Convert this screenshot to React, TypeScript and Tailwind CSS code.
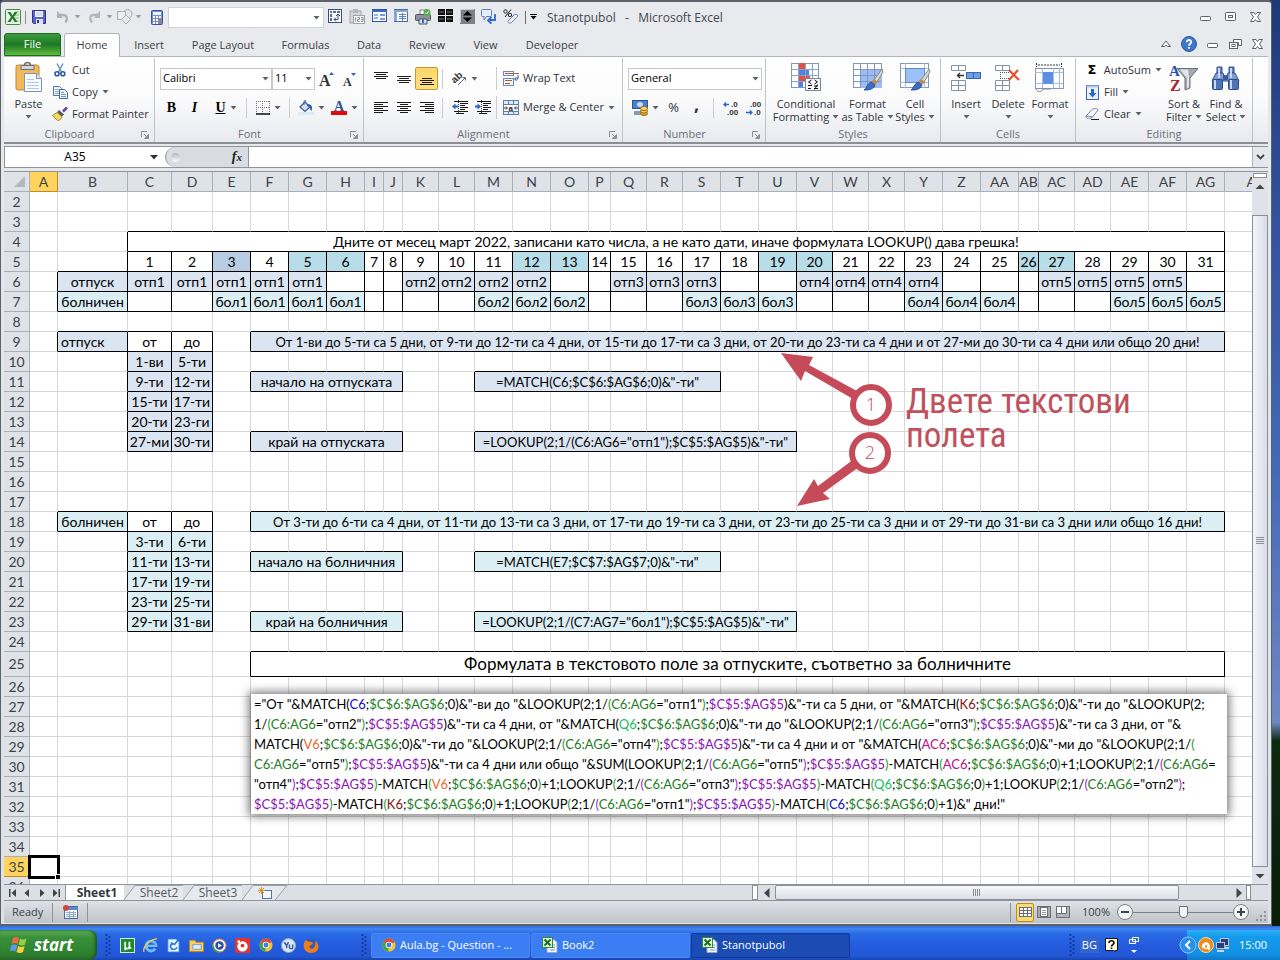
import type { ReactNode } from "react";
import { Fragment } from "react";

/* ---------- shared bits ---------- */

function Svg({ w = 16, h = 16, vb, children }: { w?: number; h?: number; vb?: string; children: ReactNode }) {
  return (
    <svg width={w} height={h} viewBox={vb ?? `0 0 ${w} ${h}`} fill="none" aria-hidden="true" className="shrink-0 overflow-visible">
      {children}
    </svg>
  );
}

function Caret({ color = "#5c6168" }: { color?: string }) {
  return (
    <Svg w={7} h={4}>
      <path d="M0.5 0h6L3.5 3.5z" fill={color} />
    </Svg>
  );
}

function Launcher() {
  return (
    <button aria-label="More options" className="absolute right-[5px] bottom-[3px]">
      <Svg w={8} h={8}>
        <path d="M0.5 6V0.5H6" stroke="#8b9098" />
        <path d="M3 3l3 3M7.500 3.500v4h-4z" stroke="#8b9098" fill="#8b9098" />
      </Svg>
    </button>
  );
}

function Sep({ h = "h-[20px]" }: { h?: string }) {
  return <span className={`w-px shrink-0 bg-[#c9cdd2] ${h}`} />;
}

/* ---------- icons ---------- */

const ExcelIcon = () => (
  <Svg>
    <rect x="0.5" y="0.5" width="15" height="15" rx="1" fill="#e9f4e4" stroke="#3f8f3a" />
    <path d="M10 3h4M10 6h4M10 9h4M10 12h4" stroke="#7bb872" />
    <path d="M2.500 3h3l2 3.500L9.500 3h3L9 8l3.500 5h-3l-2-3.400L5.500 13h-3L6 8z" fill="#1f7a2a" />
  </Svg>
);

const ExcelDoc = () => (
  <Svg>
    <path d="M5 2.500h7l3 3v10H5z" fill="#f4f7fb" stroke="#8fa6c6" />
    <path d="M8 8h5M8 10.500h5M8 13h5" stroke="#6f8fc0" />
    <rect x="0.500" y="0.500" width="10" height="10" fill="#e4f3dc" stroke="#2f8a34" />
    <path d="M2.500 2.500l6 6M8.500 2.500l-6 6" stroke="#1a6e22" strokeWidth="2" />
  </Svg>
);

const SaveIcon = () => (
  <Svg w={14} h={14}>
    <path d="M0.500 0.500h13v13h-12l-1-1z" fill="#5a62c8" stroke="#2f378c" />
    <rect x="3" y="1" width="8" height="6" fill="#f1f4fb" />
    <path d="M4 3h6M4 5h6" stroke="#b9c3dd" />
    <rect x="4" y="9" width="7" height="5" fill="#dfe4f1" />
    <rect x="5" y="10" width="2" height="3" fill="#2f378c" />
  </Svg>
);

const UndoIcon = () => (
  <Svg w={13} h={14}>
    <path d="M3 5h4c4 0 5 3.500 2.500 7.500" stroke="#aeb2b8" strokeWidth="2.400" />
    <path d="M1 0.500v7.500h6z" fill="#aeb2b8" />
  </Svg>
);

const RedoIcon = () => (
  <Svg w={13} h={14}>
    <path d="M10 5H6C2 5 1 8.500 4 12.500" stroke="#b4b8bd" strokeWidth="2.400" />
    <path d="M12 0.500v7.500H6z" fill="#b4b8bd" />
  </Svg>
);

const ShapesIcon = () => (
  <Svg>
    <circle cx="10.500" cy="5" r="4.500" fill="#e6e8ea" stroke="#a9adb2" />
    <rect x="0.500" y="2.500" width="8" height="8" fill="#eceeef" stroke="#a9adb2" />
    <path d="M9 6l4.500 4.500L9 15l-4.500-4.500z" fill="#e9ebed" stroke="#a9adb2" />
  </Svg>
);

const CalcIcon = () => (
  <Svg w={12} h={15}>
    <rect x="0.500" y="0.500" width="11" height="14" rx="1" fill="#6f8ed0" stroke="#37549c" />
    <rect x="2" y="2" width="8" height="3" fill="#eef3fc" />
    <g fill="#fff">
      <path d="M2 6h2v2H2zM5 6h2v2H5zM8 6h2v2H8zM2 9h2v2H2zM5 9h2v2H5zM2 12h2v2H2zM5 12h2v2H5z" />
    </g>
    <path d="M8 9h2v2H8zM8 12h2v2H8z" fill="#e06a3c" />
  </Svg>
);

const PivotIcon = () => (
  <Svg w={14} h={14}>
    <rect x="0.500" y="0.500" width="13" height="13" fill="#fff" stroke="#35507c" />
    <path d="M2 2h2v2H2zM5 2h3v2H5zM9 2h3v2H9zM2 5h2v3H2zM2 9h2v3H2z" fill="#4f6fa8" />
    <path d="M10 5.500v5H6M8 8.500l-2 2 2 2M8 7l2-2 2 2" stroke="#35507c" />
  </Svg>
);

const Paste123Icon = () => (
  <Svg>
    <rect x="1" y="2" width="11" height="12" fill="#d5d7da" stroke="#a0a4a9" />
    <rect x="4" y="0" width="5" height="4" fill="#b3b6ba" />
    <rect x="4.500" y="6.500" width="11" height="8" fill="#f4f5f6" stroke="#a0a4a9" />
    <path d="M6.500 8.500v4M8.500 8.500h2v2h-2v2h2M12 8.500h2v4h-2M12 10.500h2" stroke="#8f9398" />
  </Svg>
);

const FormIcon = () => (
  <Svg w={15} h={13}>
    <rect x="0.500" y="0.500" width="14" height="12" fill="#f6f9fe" stroke="#2c55a5" />
    <path d="M0 1h15v2H0z" fill="#3f6cc0" />
    <path d="M2 6h4M2 9h4" stroke="#3f6cc0" />
    <path d="M8 5h5v2H8zM8 9h5v2H8z" fill="#7c9bd6" />
  </Svg>
);

const TableIcon = () => (
  <Svg w={14} h={14}>
    <rect x="0.500" y="0.500" width="13" height="12" fill="#fff" stroke="#4a6ea8" />
    <path d="M0 1h14v2H0zM0 3h3v9H0z" fill="#86a4d6" />
    <path d="M5 5.500h7M5 7.500h7M5 9.500h7M8.500 4v8" stroke="#5d82bf" />
  </Svg>
);

const PrinterIcon = () => (
  <Svg>
    <path d="M5 1h7v5H5z" fill="#fff" stroke="#7a7f86" />
    <rect x="0.500" y="5.500" width="15" height="6" rx="1" fill="#8f949b" stroke="#4e5359" />
    <path d="M4 10h8v5H4z" fill="#cfe0f8" stroke="#4e5359" />
    <path d="M7 10h2v4H7z" fill="#3a6cc8" />
    <circle cx="12" cy="3.500" r="3.500" fill="#57ab4a" />
    <path d="M10.200 3.500l1.500 1.500 2.200-3" stroke="#fff" />
  </Svg>
);

const FreezeIcon = () => (
  <Svg w={15} h={13}>
    <path d="M0 0h7v6H0zM8 0h7v6H8zM0 7h7v6H0zM8 7h7v6H8z" fill="#111" />
    <path d="M1 3h5M9 3h5M1 10h5M9 10h5" stroke="#777" />
  </Svg>
);

const SpinnerIcon = () => (
  <Svg w={15} h={15}>
    <rect width="15" height="15" fill="#7c8187" />
    <path d="M0 0h14v1H1v13H0z" fill="#c9ccd0" />
    <path d="M7.500 2L12 6.500H3zM7.500 13L3 8.500h9z" fill="#000" />
  </Svg>
);

const CalloutIcon = () => (
  <Svg>
    <rect x="0.500" y="0.500" width="10" height="7" rx="1" fill="#e4edfb" stroke="#5c7fb8" />
    <path d="M3 7v4l3-4" fill="#e4edfb" stroke="#5c7fb8" />
    <path d="M14 5v6H8M10.500 8L7 11.500l3.500 3" stroke="#2f6ccf" strokeWidth="1.800" />
  </Svg>
);

const PercentEraserIcon = () => (
  <Svg>
    <circle cx="2.500" cy="2.500" r="1.700" stroke="#222" />
    <circle cx="7" cy="6" r="1.700" stroke="#222" />
    <path d="M8 0.500L2 8" stroke="#222" />
    <path d="M5 12l6-6c1-1 4-1 4 1l-6 6c-1 2-5 1-4-1z" fill="#f1f5fb" stroke="#6d86b4" />
  </Svg>
);

const PasteIcon = () => (
  <Svg w={28} h={31}>
    <rect x="1" y="3" width="23" height="25" rx="2" fill="#f0b95c" stroke="#c28a2d" />
    <path d="M6 3.500h13v4H6z" fill="#d5d7da" stroke="#6c7076" />
    <path d="M9.500 3.500c0-4 6-4 6 0" stroke="#6c7076" strokeWidth="1.500" />
    <path d="M9.500 11.500h12l5 5v13h-17z" fill="#f7faff" stroke="#7d94b8" />
    <path d="M21.500 11.500v5h5" fill="#dde7f6" stroke="#7d94b8" />
    <path d="M12 17.500h7M12 20.500h12M12 23.500h12M12 26.500h12" stroke="#b7c6de" />
  </Svg>
);

const CutIcon = () => (
  <Svg w={12} h={14}>
    <path d="M3 0.500L7.500 9M9 0.500L4.500 9" stroke="#6a8fc4" strokeWidth="1.500" />
    <circle cx="3" cy="10.800" r="2" stroke="#2b57a4" strokeWidth="1.600" />
    <circle cx="8.800" cy="10.800" r="2" stroke="#2b57a4" strokeWidth="1.600" />
  </Svg>
);

const CopyIcon = () => (
  <Svg w={15} h={13}>
    <path d="M0.500 0.500h6l2 2v7h-8z" fill="#f1f6fe" stroke="#4d74b4" />
    <path d="M2 3.500h4M2 5.500h4M2 7.500h4" stroke="#8fabd8" />
    <path d="M6.500 3.500h5l3 3v6h-8z" fill="#f1f6fe" stroke="#3d66ab" />
    <path d="M8 6.500h3M8 8.500h5M8 10.500h5" stroke="#6f93cb" />
  </Svg>
);

const BrushIcon = () => (
  <Svg w={16} h={14}>
    <path d="M15 0.500l-4 4" stroke="#5a4a9c" strokeWidth="2.500" />
    <path d="M7 3l5 4.500-2 2L5 5.500z" fill="#555a66" />
    <path d="M5 5.500l5 4.500c-1 2.500-3 3.500-4.500 3.500C4 12 2 10 0.500 8.500z" fill="#f3da6b" stroke="#b08f28" />
  </Svg>
);

const BorderIcon = () => (
  <Svg w={14} h={14}>
    <path d="M0.500 0v13M13.500 0v13M6.500 0v13M0 0.500h14M0 6.500h14" stroke="#777" strokeDasharray="1 1" />
    <path d="M0 13h14" stroke="#111" strokeWidth="1.500" />
  </Svg>
);

const BucketIcon = () => (
  <Svg w={16} h={15}>
    <path d="M2 7l5-5 5 5-5 4.500z" fill="#d2e0f4" stroke="#3f6098" strokeWidth="1.300" />
    <path d="M6 5V1.500c0-1.500 2-1.500 2 0" stroke="#4b6a9c" />
    <path d="M9 4c5 0 6 3.500 4.500 7-1.500-1-1-4-4.500-5z" fill="#2c5fb4" />
    <path d="M0 12h16v3H0z" fill="#dcebf3" />
  </Svg>
);

const OrientIcon = () => (
  <Svg w={15} h={14}>
    <text x="0" y="9" transform="rotate(-42 5 7)" fontSize="10" fontWeight="bold" fontFamily="Liberation Sans" fill="#333">
      ab
    </text>
    <path d="M6 13l7-7M13.500 8.500v-3h-3" stroke="#666" />
  </Svg>
);

const lines = {
  top: "M1 1.500h14M3 3.500h10M1 5.500h14M3 7.500h10",
  middle: "M1 5.500h14M3 7.500h10M1 9.500h14M3 11.500h10",
  bottom: "M3 7.500h10M1 9.500h14M3 11.500h10M1 13.500h14",
  left: "M1 2.500h14M1 4.500h9M1 6.500h14M1 8.500h9M1 10.500h14M1 12.500h9",
  center: "M1 2.500h14M4 4.500h8M1 6.500h14M4 8.500h8M1 10.500h14M4 12.500h8",
  right: "M1 2.500h14M6 4.500h9M1 6.500h14M6 8.500h9M1 10.500h14M6 12.500h9",
};

const Lines = ({ kind }: { kind: keyof typeof lines }) => (
  <Svg>
    <path d={lines[kind]} stroke="#1b1b1b" />
  </Svg>
);

const IndentIcon = ({ out }: { out?: boolean }) => (
  <Svg>
    <path d="M2 1.500h14M8 3.500h8M8 5.500h5M8 7.500h8M8 9.500h5M2 11.500h14M4 13.500h8" stroke="#1b1b1b" />
    <path d="M6.500 0v14" stroke="#444" strokeDasharray="1 1" />
    <path d={out ? "M0 6.500l3.500-3v2H6v2H3.500v2z" : "M6 6.500l-3.500-3v2H0v2h2.500v2z"} fill="#2d62c8" />
  </Svg>
);

const WrapIcon = () => (
  <Svg>
    <rect x="0.500" y="0.500" width="10" height="4" fill="#eef3fb" stroke="#7089b3" />
    <path d="M2 2.500h14" stroke="#a4612b" />
    <rect x="0.500" y="7.500" width="10" height="7" fill="#eef3fb" stroke="#7089b3" />
    <path d="M2 9.500h7M2 12.500h5" stroke="#a4612b" />
    <path d="M15 4v4h-3M13.500 6l-2 2 2 2" stroke="#2b57a4" />
  </Svg>
);

const MergeIcon = () => (
  <Svg>
    <rect x="0.500" y="0.500" width="15" height="14" fill="#dfeafb" stroke="#5e7eb0" />
    <path d="M0 4.500h16M0 11.500h16M5.500 0v4M10.500 0v4M5.500 12v3M10.500 12v3" stroke="#5e7eb0" />
    <rect x="1" y="5" width="14" height="6" fill="#fff" />
    <path d="M1 8h3M15 8h-3M3 6.500L4.500 8 3 9.500M13 6.500L11.500 8 13 9.500" stroke="#333" />
    <text x="5.500" y="10.500" fontSize="8" fontWeight="bold" fontFamily="Liberation Sans" fill="#222">
      a
    </text>
  </Svg>
);

const MoneyIcon = () => (
  <Svg>
    <rect x="0.500" y="0.500" width="15" height="8" fill="#4b80cb" stroke="#2b5596" />
    <ellipse cx="8" cy="4.500" rx="3" ry="2.500" fill="#c5dbf6" />
    <path d="M2 11h7v4H2z" fill="#8f9aa8" />
    <ellipse cx="12" cy="13.500" rx="3.500" ry="2" fill="#e0a92c" stroke="#9c6d10" />
    <ellipse cx="12" cy="11" rx="3.500" ry="2" fill="#f4c94e" stroke="#9c6d10" />
    <ellipse cx="12" cy="8.500" rx="3.500" ry="2" fill="#f8dc7a" stroke="#9c6d10" />
  </Svg>
);

const DecimalIcon = ({ more }: { more?: boolean }) => (
  <Svg w={16} h={14}>
    <text x={more ? 8 : 4} y="6" fontSize="8" fontWeight="bold" fontFamily="Liberation Sans" fill="#333">
      {more ? ".0" : ".00"}
    </text>
    <text x={more ? 4 : 8} y="14" fontSize="8" fontWeight="bold" fontFamily="Liberation Sans" fill="#333">
      {more ? ".00" : ".0"}
    </text>
    <path d={more ? "M6 3.500H1M3 1.500l-2 2 2 2" : "M0 11.500h6M4 9.500l2 2-2 2"} stroke="#2d62c8" strokeWidth="1.300" />
  </Svg>
);

const CondIcon = () => (
  <Svg w={30} h={29}>
    <rect x="0.500" y="0.500" width="27" height="24" fill="#fff" stroke="#7c97c4" />
    <path d="M7 0h7v6H7zM7 12h12v6H7z" fill="#e2513f" />
    <path d="M7 6h11v6H7zM7 18h5v6H7z" fill="#4f83dc" />
    <path d="M7.500 0v25M14.500 0v25M21.500 0v25M0 6.500h28M0 12.500h28M0 18.500h28" stroke="#8aa3cc" />
    <rect x="14.500" y="15.500" width="15" height="12" fill="#f7f9fc" stroke="#7a869a" />
    <path d="M20.500 17l-3 2 3 2M17 22.500h4M17 25.500h3M23.500 17l3 2-3 2M23 23h4M23 25.500h4M26.500 21.500l-3 5" stroke="#111" />
  </Svg>
);

const PaintBrush = () => (
  <>
    <path d="M29 6l-8 11 3 2 6-10z" fill="#d9d9d4" stroke="#8b8b85" />
    <path d="M21 16l4 3-3 3-4-3z" fill="#c08a52" />
    <path d="M18 19l4 3c-2 5-7 5-11 5 3-2 3-6 7-8z" fill="#3c6fc4" stroke="#2a559e" />
  </>
);

const TableFormatIcon = () => (
  <Svg w={30} h={29}>
    <rect x="0.500" y="0.500" width="28" height="24" fill="#fff" stroke="#7c97c4" />
    <path d="M7 6h22v19H7z" fill="#9dbdf2" />
    <path d="M7.500 0v25M14.500 0v25M21.500 0v25M0 6.500h28M0 12.500h28M0 18.500h28" stroke="#7c97c4" />
    <PaintBrush />
  </Svg>
);

const CellStylesIcon = () => (
  <Svg w={30} h={29}>
    <rect x="0.500" y="0.500" width="28" height="24" fill="#fff" stroke="#7c97c4" />
    <path d="M0 5.500h28M0 19.500h28M5.500 0v25M24.500 0v25" stroke="#a9bcdc" />
    <rect x="5.500" y="5.500" width="19" height="14" fill="#9dc0f8" stroke="#5f8cd6" />
    <PaintBrush />
  </Svg>
);

const InsertCellsIcon = () => (
  <Svg w={30} h={28}>
    <path d="M0.500 1.500h14v5h-14zM7.500 1.500v5M0.500 16.500h14v10h-14zM7.500 16.500v10M0.500 21.500h14" fill="#fff" stroke="#8392ab" />
    <rect x="15.500" y="8.500" width="14" height="6" fill="#6f9ce6" stroke="#3766b4" />
    <path d="M22.500 8v7" stroke="#3766b4" />
    <path d="M13 11.500H6M9 9l-2.500 2.500L9 14" stroke="#333" strokeWidth="1.300" />
  </Svg>
);

const DeleteCellsIcon = () => (
  <Svg w={26} h={28}>
    <path d="M0.500 1.500h14v5h-14zM7.500 1.500v5M0.500 16.500h14v10h-14zM7.500 16.500v10M0.500 21.500h14" fill="#fff" stroke="#8392ab" />
    <path d="M5 8.500h9M5 14.500h9M5.500 8v7" stroke="#555" strokeDasharray="1 1" />
    <path d="M14 6l10 10M23 6l-9 10" stroke="#e8502f" strokeWidth="2.200" />
  </Svg>
);

const FormatCellsIcon = () => (
  <Svg w={30} h={30}>
    <path d="M1.500 0v4M26.500 0v4M3 2h22" stroke="#333" strokeDasharray="2 1" />
    <rect x="0.500" y="5.500" width="28" height="20" fill="#fff" stroke="#7c97c4" />
    <path d="M0 9.500h28M0 20.500h28M7.500 5v20M18.500 5v20M24.500 5v20" stroke="#a9bcdc" />
    <rect x="8" y="9" width="10" height="12" fill="#5c8fe4" />
    <path d="M1 26c2 4 6 3 7 0h8" stroke="#7c8aa3" />
  </Svg>
);

const FillIcon = () => (
  <Svg w={13} h={15}>
    <rect x="0.500" y="0.500" width="12" height="14" fill="#eaf1fc" stroke="#3f64a8" />
    <path d="M0.500 0.500h12v2h-12z" fill="#b3c9ec" />
    <path d="M5 4h3v4h2.500l-4 4.500L2.500 8H5z" fill="#2d66d0" />
  </Svg>
);

const EraserIcon = () => (
  <Svg w={14} h={12}>
    <path d="M1 8l6-6.500c1-1 6-1.500 6 .5L7.500 9C6 11 0 11 1 8z" fill="#f5f8fd" stroke="#6f83a8" />
    <path d="M1 8l5 .5L7.500 9" stroke="#6f83a8" />
    <path d="M6 11.500h8" stroke="#222" />
  </Svg>
);

const SortIcon = () => (
  <Svg w={30} h={29}>
    <text x="0" y="13" fontSize="15" fontWeight="bold" fontFamily="Liberation Serif" fill="#2b55a8">
      A
    </text>
    <text x="1" y="28" fontSize="16" fontWeight="bold" fontFamily="Liberation Serif" fill="#a3272b">
      Z
    </text>
    <path d="M8 5.500h21L21 15v10l-5 2V15z" fill="#a6aab0" stroke="#6d7178" />
    <path d="M11 6.500h8l1 8v10l-2 1V15z" fill="#e3e5e8" />
  </Svg>
);

const FindIcon = () => (
  <Svg w={28} h={26}>
    <path d="M5 2h5v6H5zM17 2h5v6h-5z" fill="#5f7fb8" stroke="#32518e" />
    <path d="M4 8h7l2 5h1l2-5h7l4 8H0z" fill="#7d9bd0" stroke="#32518e" />
    <rect x="0.500" y="14.500" width="10" height="10" rx="1" fill="#4f74b6" stroke="#2c4a86" />
    <rect x="16.500" y="14.500" width="10" height="10" rx="1" fill="#4f74b6" stroke="#2c4a86" />
    <path d="M3 15v9M19 15v9M7 3v10M19 3v10" stroke="#c8d8f2" strokeWidth="2" />
    <rect x="11" y="10" width="5" height="5" fill="#3a5b9c" />
  </Svg>
);

const MinGlyph = () => (
  <Svg w={12} h={12}>
    <rect x="0.500" y="5.500" width="10" height="4" rx="1" fill="#fff" stroke="#5d6168" />
  </Svg>
);

const MaxGlyph = () => (
  <Svg w={12} h={12}>
    <rect x="0.500" y="1.500" width="10" height="8" rx="1" fill="#fff" stroke="#5d6168" />
    <rect x="3.500" y="4.500" width="4" height="2" stroke="#5d6168" />
  </Svg>
);

const RestoreGlyph = () => (
  <Svg w={13} h={12}>
    <path d="M4.500 1.500h8v6h-3v-3h-5z" fill="#fff" stroke="#5d6168" />
    <rect x="0.500" y="4.500" width="8" height="6" fill="#fff" stroke="#5d6168" />
    <rect x="3" y="6.500" width="3" height="2" stroke="#5d6168" />
  </Svg>
);

const CloseGlyph = () => (
  <Svg w={12} h={12}>
    <path d="M0.500 1.500h3.500l1.500 2 1.500-2h3.500L7.500 6l3 4.500H7l-1.500-2-1.500 2H0.500l3-4.500z" fill="#fff" stroke="#5d6168" />
  </Svg>
);

/* ---------- title bar ---------- */

const quickTools: [string, () => ReactNode][] = [
  ["PivotTable", PivotIcon],
  ["Paste values", Paste123Icon],
  ["Form", FormIcon],
  ["Table", TableIcon],
  ["Print", PrinterIcon],
  ["Freeze panes", FreezeIcon],
  ["Spinner", SpinnerIcon],
  ["Comments", CalloutIcon],
  ["Clear formats", PercentEraserIcon],
];

function TitleBar() {
  return (
    <header className="flex h-[30px] items-center text-[#41464d]">
      <span className="flex w-[18px] justify-center">
        <ExcelIcon />
      </span>
      <span className="mx-[3px] h-[13px] w-px bg-[#8b9098]" />
      <button aria-label="Save" className="flex w-[20px] justify-center">
        <SaveIcon />
      </button>
      <button aria-label="Undo" className="flex w-[32px] items-center justify-end gap-[5px]">
        <UndoIcon />
        <Caret color="#a0a4aa" />
      </button>
      <button aria-label="Redo" className="flex w-[32px] items-center justify-end gap-[5px]">
        <RedoIcon />
        <Caret color="#a0a4aa" />
      </button>
      <button aria-label="Shapes" className="flex w-[29px] items-center justify-end gap-[2px]">
        <ShapesIcon />
        <Caret color="#a0a4aa" />
      </button>
      <button aria-label="Calculator" className="ml-[5px] flex w-[20px] justify-center">
        <CalcIcon />
      </button>
      <span className="relative ml-px w-[156px]">
        <select aria-label="Style" className="block h-[21px] w-full appearance-none border border-[#cfd2d6] bg-white">
          <option></option>
        </select>
        <span className="pointer-events-none absolute top-[9px] right-[4px]">
          <Caret />
        </span>
      </span>
      <div className="flex">
        {quickTools.map(([label, Icon]) => (
          <button key={label} aria-label={label} className="flex w-[22px] justify-center">
            <Icon />
          </button>
        ))}
      </div>
      <span className="mr-[4px] ml-[3px] h-[13px] w-px bg-[#6a6f76]" />
      <button aria-label="Customize toolbar" className="flex flex-col items-center gap-px">
        <span className="h-px w-[7px] bg-black" />
        <Caret color="#000" />
      </button>
      <h1 className="mt-[2px] ml-[10px] flex-1 text-[12px] leading-[16px] whitespace-pre">Stanotpubol   -   Microsoft Excel</h1>
      <div className="mr-[6px] flex gap-[13px]">
        <button aria-label="Minimize">
          <MinGlyph />
        </button>
        <button aria-label="Maximize">
          <MaxGlyph />
        </button>
        <button aria-label="Close">
          <CloseGlyph />
        </button>
      </div>
    </header>
  );
}

const tabs: [string, string][] = [
  ["Insert", "w-[58px]"],
  ["Page Layout", "w-[90px]"],
  ["Formulas", "w-[75px]"],
  ["Data", "w-[52px]"],
  ["Review", "w-[64px]"],
  ["View", "w-[53px]"],
  ["Developer", "w-[80px]"],
];

function RibbonTabs() {
  return (
    <nav className="flex h-[25px] items-end border-b border-[#b0b5bb] text-[11px] text-[#3c4148]">
      <button className="h-[23px] w-[57px] rounded-t-[3px] border border-[#1d6a22] bg-gradient-to-b from-[#3a9a3a] via-[#1c7a26] to-[#5fbb3c] text-white">
        File
      </button>
      <button className="relative top-px ml-[3px] h-[24px] w-[56px] rounded-t-[3px] border border-b-0 border-[#b0b5bb] bg-white">
        Home
      </button>
      {tabs.map(([name, width]) => (
        <button key={name} className={`h-[23px] pt-px ${width}`}>
          {name}
        </button>
      ))}
      <div className="mr-[4px] ml-auto flex h-[24px] items-center gap-[10px]">
        <button aria-label="Collapse ribbon">
          <Svg w={10} h={8}>
            <path d="M0.500 6.500L5 1l4.500 5.500H6.500L5 5 3.500 6.500z" fill="#fff" stroke="#5d6168" />
          </Svg>
        </button>
        <button aria-label="Help">
          <Svg>
            <circle cx="8" cy="8" r="7.500" fill="#3f78c8" stroke="#2c5ca4" />
            <path d="M5.800 6.200c0-3.200 4.600-2.800 4.400 0C10 7.800 8 7.800 8 9.800M8 11v1.800" stroke="#fff" strokeWidth="1.800" />
          </Svg>
        </button>
        <button aria-label="Minimize workbook">
          <MinGlyph />
        </button>
        <button aria-label="Restore workbook">
          <RestoreGlyph />
        </button>
        <button aria-label="Close workbook">
          <CloseGlyph />
        </button>
      </div>
    </nav>
  );
}

/* ---------- ribbon ---------- */

function Group({ name, width, launcher, children }: { name: string; width: string; launcher?: boolean; children: ReactNode }) {
  return (
    <section aria-label={name} className={`relative flex shrink-0 flex-col border-r border-[#bfc4ca] ${width}`}>
      <div className="flex-1">{children}</div>
      <div className={`h-[17px] text-center leading-[17px] text-[#6b7078] ${launcher ? "pr-[19px]" : ""}`}>{name}</div>
      {launcher && <Launcher />}
    </section>
  );
}

function Tool({ label, w = "w-[23px]", on, children }: { label: string; w?: string; on?: boolean; children: ReactNode }) {
  return (
    <button
      aria-label={label}
      className={`flex h-[23px] shrink-0 items-center justify-center gap-[4px] rounded-[2px] ${w} ${
        on ? "border border-[#c39a2e] bg-gradient-to-b from-[#fbd56b] to-[#ffe07e]" : ""
      }`}
    >
      {children}
    </button>
  );
}

function BigTool({ icon, text, w }: { icon: ReactNode; text: [string, string?]; w: string }) {
  return (
    <button className={`mt-[4px] flex shrink-0 flex-col items-center leading-[13px] whitespace-nowrap ${w}`}>
      <span className="mb-[4px] flex h-[31px] items-center">{icon}</span>
      <span>{text[0]}</span>
      <span className="flex h-[13px] items-center gap-[3px]">
        {text[1]}
        <Caret />
      </span>
    </button>
  );
}

function SmallTool({ icon, text, caret }: { icon: ReactNode; text: string; caret?: boolean }) {
  return (
    <button className="flex h-[22px] items-center gap-[4px] whitespace-nowrap">
      <span className="flex w-[16px] justify-center">{icon}</span>
      {text}
      {caret && <Caret />}
    </button>
  );
}

function Combo({ label, value, w }: { label: string; value: string; w: string }) {
  return (
    <span className={`relative ${w}`}>
      <select aria-label={label} className="block h-[22px] w-full appearance-none border border-[#c5c9ce] bg-white px-[2px] text-black">
        <option>{value}</option>
      </select>
      <span className="pointer-events-none absolute top-[9px] right-[3px]">
        <Caret />
      </span>
    </span>
  );
}

function Ribbon() {
  return (
    <div className="flex h-[87px] border-b-2 border-[#8b9097] bg-gradient-to-b from-white via-[#fbfbfc] to-[#e8eaee] pt-px text-[11px] text-[#2f343a]">
      <Group name="Clipboard" width="w-[151px]" launcher>
        <div className="flex pl-[4px]">
          <BigTool icon={<PasteIcon />} text={["Paste"]} w="w-[41px]" />
          <div className="flex flex-col pt-px pl-[3px]">
            <SmallTool icon={<CutIcon />} text="Cut" />
            <SmallTool icon={<CopyIcon />} text="Copy" caret />
            <SmallTool icon={<BrushIcon />} text="Format Painter" />
          </div>
        </div>
      </Group>

      <Group name="Font" width="w-[209px]" launcher>
        <div className="mt-[9px] flex h-[23px] items-center pl-[5px]">
          <Combo label="Font" value="Calibri" w="w-[112px]" />
          <Combo label="Font size" value="11" w="w-[43px]" />
          <Tool label="Grow font">
            <Svg w={15} h={16}>
              <text x="0" y="15" fontSize="16" fontWeight="bold" fontFamily="Liberation Serif" fill="#333">
                A
              </text>
              <path d="M10 4h5l-2.500-3z" fill="#2d62c8" />
            </Svg>
          </Tool>
          <Tool label="Shrink font">
            <Svg w={15} h={16}>
              <text x="1" y="15" fontSize="12" fontWeight="bold" fontFamily="Liberation Serif" fill="#333">
                A
              </text>
              <path d="M9 2h5l-2.500 3z" fill="#2d62c8" />
            </Svg>
          </Tool>
        </div>
        <div className="mt-[6px] flex h-[23px] items-center pl-[5px] font-['Liberation_Serif',serif] text-[14px] text-black">
          <Tool label="Bold">
            <b>B</b>
          </Tool>
          <Tool label="Italic">
            <b>
              <i>I</i>
            </b>
          </Tool>
          <Tool label="Underline" w="w-[40px]">
            <b className="underline">U</b>
            <Caret />
          </Tool>
          <Sep />
          <Tool label="Borders" w="w-[42px]">
            <BorderIcon />
            <Caret />
          </Tool>
          <Sep />
          <Tool label="Fill color" w="w-[42px]">
            <BucketIcon />
            <Caret />
          </Tool>
          <Tool label="Font color" w="w-[24px]">
            <Svg w={16} h={15}>
              <text x="3" y="11" fontSize="14" fontWeight="bold" fontFamily="Liberation Serif" fill="#2f5494">
                A
              </text>
              <path d="M0 11h16v4H0z" fill="#e00b0b" />
            </Svg>
            <Caret />
          </Tool>
        </div>
      </Group>

      <Group name="Alignment" width="w-[259px]" launcher>
        <div className="mt-[9px] flex h-[23px] items-center pl-[5px]">
          <Tool label="Top align">
            <Lines kind="top" />
          </Tool>
          <Tool label="Middle align">
            <Lines kind="middle" />
          </Tool>
          <Tool label="Bottom align" on>
            <Lines kind="bottom" />
          </Tool>
          <span className="ml-[4px]">
            <Sep h="block h-[20px]" />
          </span>
          <Tool label="Orientation" w="w-[43px]">
            <OrientIcon />
            <Caret />
          </Tool>
          <span className="ml-[10px]">
            <Sep h="block h-[23px]" />
          </span>
          <div className="ml-[6px]">
            <SmallTool icon={<WrapIcon />} text="Wrap Text" />
          </div>
        </div>
        <div className="mt-[6px] flex h-[23px] items-center pl-[5px]">
          <Tool label="Align left">
            <Lines kind="left" />
          </Tool>
          <Tool label="Center">
            <Lines kind="center" />
          </Tool>
          <Tool label="Align right">
            <Lines kind="right" />
          </Tool>
          <span className="ml-[4px]">
            <Sep h="block h-[20px]" />
          </span>
          <span className="ml-[5px] flex">
            <Tool label="Decrease indent">
              <IndentIcon out />
            </Tool>
            <Tool label="Increase indent">
              <IndentIcon />
            </Tool>
          </span>
          <span className="ml-[2px]">
            <Sep h="block h-[23px]" />
          </span>
          <div className="ml-[6px]">
            <SmallTool icon={<MergeIcon />} text="Merge & Center" caret />
          </div>
        </div>
      </Group>

      <Group name="Number" width="w-[143px]" launcher>
        <div className="mt-[9px] flex h-[23px] items-center pl-[5px]">
          <Combo label="Number format" value="General" w="w-[134px]" />
        </div>
        <div className="mt-[6px] flex h-[23px] items-center pl-[6px]">
          <Tool label="Accounting format" w="w-[33px]">
            <MoneyIcon />
            <Caret />
          </Tool>
          <Tool label="Percent style">
            <span className="text-[13px]">%</span>
          </Tool>
          <Tool label="Comma style">
            <span className="pb-[8px] text-[18px] leading-[18px] font-bold">,</span>
          </Tool>
          <span className="mx-[5px]">
            <Sep h="block h-[20px]" />
          </span>
          <Tool label="Increase decimal">
            <DecimalIcon more />
          </Tool>
          <Tool label="Decrease decimal">
            <DecimalIcon />
          </Tool>
        </div>
      </Group>

      <Group name="Styles" width="w-[175px]">
        <div className="flex pl-[4px]">
          <BigTool icon={<CondIcon />} text={["Conditional", "Formatting"]} w="w-[72px]" />
          <BigTool icon={<TableFormatIcon />} text={["Format", "as Table"]} w="w-[51px]" />
          <BigTool icon={<CellStylesIcon />} text={["Cell", "Styles"]} w="w-[44px]" />
        </div>
      </Group>

      <Group name="Cells" width="w-[135px]">
        <div className="flex pl-[4px]">
          <BigTool icon={<InsertCellsIcon />} text={["Insert"]} w="w-[42px]" />
          <BigTool icon={<DeleteCellsIcon />} text={["Delete"]} w="w-[42px]" />
          <BigTool icon={<FormatCellsIcon />} text={["Format"]} w="w-[42px]" />
        </div>
      </Group>

      <Group name="Editing" width="w-[177px]">
        <div className="flex pl-[8px]">
          <div className="flex w-[78px] flex-col pt-px">
            <SmallTool icon={<span className="font-['DejaVu_Sans'] text-[13px] font-bold text-black">Σ</span>} text="AutoSum" caret />
            <SmallTool icon={<FillIcon />} text="Fill" caret />
            <SmallTool icon={<EraserIcon />} text="Clear" caret />
          </div>
          <BigTool icon={<SortIcon />} text={["Sort &", "Filter"]} w="w-[44px]" />
          <BigTool icon={<FindIcon />} text={["Find &", "Select"]} w="w-[40px]" />
        </div>
      </Group>
    </div>
  );
}

function FormulaBar() {
  return (
    <div className="mt-[2px] mb-[3px] flex h-[22px] shrink-0 border border-r-0 border-[#8f949b] bg-white">
      <input aria-label="Name box" defaultValue="A35" className="w-[140px] text-center text-[12px] text-black outline-none" />
      <button aria-label="Names" className="w-[20px] pl-[5px]">
        <Svg w={8} h={5}>
          <path d="M0 0h8L4 4.500z" fill="#333" />
        </Svg>
      </button>
      <div className="flex w-[84px] items-center justify-between rounded-l-full border-r border-l border-[#8f949b] bg-[#d9dde2] pr-[6px] pl-[5px]">
        <span className="h-[9px] w-[9px] rounded-full bg-gradient-to-b from-[#b3b7bd] to-white" />
        <button aria-label="Insert function" className="font-['Liberation_Serif',serif] text-[14px] leading-[16px] font-bold text-[#222] italic">
          f<span className="text-[11px]">x</span>
        </button>
      </div>
      <input aria-label="Formula bar" className="min-w-0 flex-1 px-1 outline-none" />
      <button aria-label="Expand formula bar" className="flex w-[16px] items-center justify-center border-l border-[#b0b5bb] bg-[#e4e7eb]">
        <Svg w={9} h={6}>
          <path d="M1 1l3.500 3.500L8 1" stroke="#444" strokeWidth="1.800" />
        </Svg>
      </button>
    </div>
  );
}

/* ---------- worksheet ---------- */

const columns: [string, number][] = [
  ["A", 28], ["B", 70], ["C", 44], ["D", 41], ["E", 38], ["F", 38], ["G", 38], ["H", 38], ["I", 19], ["J", 19],
  ["K", 36], ["L", 36], ["M", 38], ["N", 38], ["O", 38], ["P", 22], ["Q", 36], ["R", 36], ["S", 38], ["T", 38],
  ["U", 38], ["V", 36], ["W", 36], ["X", 36], ["Y", 38], ["Z", 38], ["AA", 38], ["AB", 20], ["AC", 36], ["AD", 36],
  ["AE", 38], ["AF", 38], ["AG", 38], ["AH", 64],
];
const names = columns.map(([name]) => name);
const headWidth = 26;
const tableWidth = headWidth + columns.reduce((sum, [, w]) => sum + w, 0);

const BLUE = "bg-[#dbe5f1]";
const AQUA = "bg-[#daeef3]";
const DAY = "bg-[#b7dde8]";

type Cell = { text: string; span: number; cls: string };
const cells: Record<string, Cell> = {};

function put(from: string, row: number, text: string, cls = "", to = from) {
  const start = names.indexOf(from);
  cells[`${row}:${start}`] = { text, span: names.indexOf(to) - start + 1, cls };
}

put("C", 4, "Дните от месец март 2022, записани като числа, а не като дати, иначе формулата LOOKUP() дава грешка!", "bg-white", "AG");

const weekend = [5, 6, 12, 13, 19, 20, 26, 27];
const leave: [number, number][] = [[1, 5], [9, 12], [15, 17], [20, 23], [27, 30]];
const sick: [number, number][] = [[3, 6], [11, 13], [17, 19], [23, 25], [29, 31]];

for (let day = 1; day <= 31; day++) {
  const col = names[day + 1];
  put(col, 5, String(day), day === 3 ? "bg-[#b8cce4]" : weekend.includes(day) ? DAY : "bg-white");
  const l = leave.findIndex(([a, b]) => day >= a && day <= b);
  const s = sick.findIndex(([a, b]) => day >= a && day <= b);
  put(col, 6, l < 0 ? "" : `отп${l + 1}`, l < 0 ? "bg-white" : BLUE);
  put(col, 7, s < 0 ? "" : `бол${s + 1}`, s < 0 ? "bg-white" : AQUA);
}

put("B", 6, "отпуск", BLUE);
put("B", 7, "болничен", AQUA);

put("B", 9, "отпуск", `${BLUE} text-left pl-[3px]`);
put("C", 9, "от", "bg-white");
put("D", 9, "до", "bg-white");
put("F", 9, "От 1-ви до 5-ти са 5 дни, от 9-ти до 12-ти са 4 дни, от 15-ти до 17-ти са 3 дни, от 20-ти до 23-ти са 4 дни и от 27-ми до 30-ти са 4 дни или общо 20 дни!", `${BLUE} text-[13px]`, "AG");
[["1-ви", "5-ти"], ["9-ти", "12-ти"], ["15-ти", "17-ти"], ["20-ти", "23-ги"], ["27-ми", "30-ти"]].forEach(([a, b], i) => {
  put("C", 10 + i, a, BLUE);
  put("D", 10 + i, b, BLUE);
});
put("F", 11, "начало на отпуската", BLUE, "J");
put("M", 11, '=MATCH(C6;$C$6:$AG$6;0)&"-ти"', `${BLUE} text-[13px]`, "S");
put("F", 14, "край на отпуската", BLUE, "J");
put("M", 14, '=LOOKUP(2;1/(C6:AG6="отп1");$C$5:$AG$5)&"-ти"', `${BLUE} text-[13px]`, "U");

put("B", 18, "болничен", AQUA);
put("C", 18, "от", "bg-white");
put("D", 18, "до", "bg-white");
put("F", 18, "От 3-ти до 6-ти са 4 дни, от 11-ти до 13-ти са 3 дни, от 17-ти до 19-ти са 3 дни, от 23-ти до 25-ти са 3 дни и от 29-ти до 31-ви са 3 дни или общо 16 дни!", `${AQUA} text-[13px]`, "AG");
[["3-ти", "6-ти"], ["11-ти", "13-ти"], ["17-ти", "19-ти"], ["23-ти", "25-ти"], ["29-ти", "31-ви"]].forEach(([a, b], i) => {
  put("C", 19 + i, a, AQUA);
  put("D", 19 + i, b, AQUA);
});
put("F", 20, "начало на болничния", AQUA, "J");
put("M", 20, '=MATCH(E7;$C$7:$AG$7;0)&"-ти"', `${AQUA} text-[13px]`, "S");
put("F", 23, "край на болничния", AQUA, "J");
put("M", 23, '=LOOKUP(2;1/(C7:AG7="бол1");$C$5:$AG$5)&"-ти"', `${AQUA} text-[13px]`, "U");
put("F", 25, "Формулата в текстовото поле за отпуските, съответно за болничните", "bg-white text-[17px]", "AG");

// the merged cell that covers row/col, if any
function cellAt(row: number, col: number) {
  for (let c = col; c >= 0; c--) {
    const cell = cells[`${row}:${c}`];
    if (cell) return c + cell.span > col ? cell : undefined;
  }
  return undefined;
}

function SheetRow({ row }: { row: number }) {
  const out: ReactNode[] = [];
  let col = 0;
  while (col < columns.length) {
    const cell = cells[`${row}:${col}`];
    const span = cell?.span ?? 1;
    const right = cell || cellAt(row, col + span) ? "border-r-black" : "border-r-[#d6d8db]";
    let below = !!cell;
    for (let c = col; c < col + span; c++) below = below || !!cellAt(row + 1, c);
    const bottom = below ? "border-b-black" : "border-b-[#d6d8db]";
    const selected = row === 35 && col === 0;
    out.push(
      <td
        key={col}
        colSpan={span}
        className={`border-r border-b p-0 text-center whitespace-nowrap ${right} ${bottom} ${cell?.cls ?? "bg-white"} ${
          selected ? "relative outline-3 -outline-offset-1 outline-black" : ""
        }`}
      >
        {cell?.text}
        {selected && <span className="absolute -right-[3px] -bottom-[3px] h-[5px] w-[5px] border-t border-l border-white bg-black" />}
      </td>,
    );
    col += span;
  }
  return (
    <tr className={row === 25 ? "h-[25px]" : "h-[20px]"}>
      <th
        scope="row"
        className={`border-r border-b p-0 font-normal text-[#3d4249] ${
          row === 35 ? "border-[#c08a2a] bg-[#ffd45c]" : "border-[#a9afb8] bg-[#dfe3e8]"
        }`}
      >
        {row}
      </th>
      {out}
    </tr>
  );
}

const tokenColors: Record<string, string> = {
  "$C$6:$AG$6": "text-[#1d7d1d]",
  "C6:AG6": "text-[#1d7d1d]",
  "$C$5:$AG$5": "text-[#8a12b4]",
  AC6: "text-[#b80f86]",
  C6: "text-[#0a0ad2]",
  K6: "text-[#8a1010]",
  Q6: "text-[#16c060]",
  V6: "text-[#f0672a]",
};

// ~g and ~p colour the bracket that follows them
const formula = [
  '="От "&MATCH(C6;$C$6:$AG$6;0)&"-ви до "&LOOKUP(2;1/~g(C6:AG6="отп1"~g);$C$5:$AG$5)&"-ти са 5 дни, от "&MATCH(K6;$C$6:$AG$6;0)&"-ти до "&LOOKUP(2;',
  '1/~g(C6:AG6="отп2"~g);$C$5:$AG$5)&"-ти са 4 дни, от "&MATCH(Q6;$C$6:$AG$6;0)&"-ти до "&LOOKUP(2;1/~g(C6:AG6="отп3"~g);$C$5:$AG$5)&"-ти са 3 дни, от "&',
  'MATCH(V6;$C$6:$AG$6;0)&"-ти до "&LOOKUP(2;1/~g(C6:AG6="отп4"~g);$C$5:$AG$5)&"-ти са 4 дни и от "&MATCH(AC6;$C$6:$AG$6;0)&"-ми до "&LOOKUP(2;1/~g(',
  'C6:AG6="отп5"~g);$C$5:$AG$5)&"-ти са 4 дни или общо "&SUM(LOOKUP~g(2;1/~p(C6:AG6="отп5"~p);$C$5:$AG$5~g)-MATCH~g(AC6;$C$6:$AG$6;0~g)+1;LOOKUP~g(2;1/~p(C6:AG6=',
  '"отп4"~p);$C$5:$AG$5~g)-MATCH~g(V6;$C$6:$AG$6;0~g)+1;LOOKUP~g(2;1/~p(C6:AG6="отп3"~p);$C$5:$AG$5~g)-MATCH~g(Q6;$C$6:$AG$6;0~g)+1;LOOKUP~g(2;1/~p(C6:AG6="отп2"~p);',
  '$C$5:$AG$5~g)-MATCH~g(K6;$C$6:$AG$6;0~g)+1;LOOKUP~g(2;1/~p(C6:AG6="отп1"~p);$C$5:$AG$5~g)-MATCH~g(C6;$C$6:$AG$6;0~g)+1)&" дни!"',
];
const tokenRe = /(~[gp][()]|\$C\$6:\$AG\$6|\$C\$5:\$AG\$5|C6:AG6|AC6|C6|K6|Q6|V6)/;

function FormulaNote() {
  return (
    <div className="absolute top-[522px] left-[247px] w-[976px] bg-white pl-[3px] text-[13px] leading-[20px] whitespace-nowrap text-black shadow-[0_0_9px_2px_rgba(0,0,0,0.55)]">
      {formula.map((line, i) => (
        <p key={i}>
          {line.split(tokenRe).map((part, j) => {
            if (part.startsWith("~g")) return <span key={j} className="text-[#2d9a2d]">{part[2]}</span>;
            if (part.startsWith("~p")) return <span key={j} className="text-[#a22ad0]">{part[2]}</span>;
            if (tokenColors[part]) return <span key={j} className={tokenColors[part]}>{part}</span>;
            return <Fragment key={j}>{part}</Fragment>;
          })}
        </p>
      ))}
    </div>
  );
}

function Callout() {
  return (
    <div className="absolute top-[170px] left-[770px] flex items-start">
      <Svg w={124} h={172}>
        <g fill="#c54b58">
          <path d="M7 11l32 4-4 8 48 26-4 8-48-28-4 10z" />
          <path d="M23 164l17-27 4 7 36-27 5 8-36 26 7 6z" />
        </g>
        <circle cx="97" cy="63" r="18" fill="#fff" stroke="#c54b58" strokeWidth="6" />
        <circle cx="96" cy="111" r="18" fill="#fff" stroke="#c54b58" strokeWidth="6" />
        <g fill="#c54b58" fontFamily="'Open Sans'" fontWeight="300" fontSize="18" textAnchor="middle">
          <text x="97" y="69">1</text>
          <text x="96" y="117">2</text>
        </g>
      </Svg>
      <p className="mt-[43px] ml-[8px] font-['Roboto_Condensed','Open_Sans_Condensed',sans-serif] text-[35px] leading-[34px] font-normal whitespace-nowrap text-[#c0505c]">
        Двете текстови
        <br />
        полета
      </p>
    </div>
  );
}

function Sheet() {
  const rows = Array.from({ length: 35 }, (_, i) => i + 2);
  return (
    <div className="relative min-w-0 flex-1 overflow-hidden bg-white font-['Lato','Open_Sans',sans-serif] text-[14px] leading-[18px] text-black">
      <table className="table-fixed border-separate border-spacing-0" style={{ width: tableWidth }}>
        <colgroup>
          <col style={{ width: headWidth }} />
          {columns.map(([name, width]) => (
            <col key={name} style={{ width }} />
          ))}
        </colgroup>
        <thead>
          <tr className="h-[20px]">
            <th aria-label="Select all" className="border-r border-b border-[#a9afb8] bg-[#dfe3e8] p-0">
              <span className="flex justify-end pr-[4px]">
                <Svg w={11} h={11}>
                  <path d="M11 0v11H0z" fill="#b4b9c0" />
                </Svg>
              </span>
            </th>
            {names.map((name) => (
              <th
                key={name}
                scope="col"
                className={`border-r border-b p-0 text-center font-normal text-[#3d4249] ${
                  name === "A" ? "border-[#c08a2a] bg-[#ffd45c]" : "border-[#a9afb8] bg-[#dfe3e8]"
                }`}
              >
                {name}
              </th>
            ))}
          </tr>
        </thead>
        <tbody>
          {rows.map((row) => (
            <SheetRow key={row} row={row} />
          ))}
        </tbody>
      </table>
      <FormulaNote />
      <Callout />
    </div>
  );
}

function Arrow({ d }: { d: string }) {
  return (
    <Svg w={10} h={10}>
      <path d={d} fill="#3f444b" />
    </Svg>
  );
}

function VerticalScroll() {
  return (
    <div className="flex w-[16px] shrink-0 flex-col items-center bg-[#dfe3e8]">
      <span className="mt-px flex h-[5px] w-[14px] items-center justify-center border border-[#8b9097] bg-white" />
      <button aria-label="Scroll up" className="flex h-[17px] items-center">
        <Arrow d="M0.500 7h9L5 2.500z" />
      </button>
      <div className="mt-[20px] flex w-full flex-1 items-center justify-center border border-[#8b9097] bg-gradient-to-r from-[#f3f5f9] to-[#d8dce8]">
        <Svg w={8} h={8}>
          <path d="M0 0.500h8M0 2.500h8M0 4.500h8M0 6.500h8" stroke="#8b9097" />
        </Svg>
      </div>
      <button aria-label="Scroll down" className="flex h-[17px] items-center">
        <Arrow d="M0.500 3h9L5 7.500z" />
      </button>
    </div>
  );
}

function Slant() {
  return (
    <Svg w={14} h={15}>
      <path d="M0 15L11 0.500h3V15z" fill="#e6e9ed" />
      <path d="M0 15L11 0.500h3" stroke="#9aa0a8" />
    </Svg>
  );
}

function SheetTabs() {
  return (
    <div className="flex h-[17px] shrink-0 items-stretch border-t border-b border-[#8f949b] bg-[#dce0e5] text-[12px] leading-[14px] text-[#555a61]">
      <div className="flex w-[62px] items-center justify-between border-r border-[#8f949b] px-[4px]">
        <button aria-label="First sheet">
          <Arrow d="M1 1h1.500v8H1zM8 1v8L3.500 5z" />
        </button>
        <button aria-label="Previous sheet">
          <Arrow d="M7 1v8L2.500 5z" />
        </button>
        <button aria-label="Next sheet">
          <Arrow d="M3 1v8l4.500-4z" />
        </button>
        <button aria-label="Last sheet">
          <Arrow d="M7.500 1H9v8H7.500zM2 1v8l4.500-4z" />
        </button>
      </div>
      <button className="w-[58px] bg-white pl-[4px] font-bold text-[#33383f]">Sheet1</button>
      <Slant />
      <button className="w-[42px] border-t border-[#9aa0a8] bg-[#e6e9ed]">Sheet2</button>
      <span className="w-[3px] border-t border-[#9aa0a8] bg-[#e6e9ed]" />
      <Slant />
      <button className="w-[42px] border-t border-[#9aa0a8] bg-[#e6e9ed]">Sheet3</button>
      <span className="w-[3px] border-t border-[#9aa0a8] bg-[#e6e9ed]" />
      <Slant />
      <button aria-label="Insert sheet" className="flex w-[18px] items-center justify-center border-t border-[#9aa0a8] bg-[#e6e9ed]">
        <Svg w={15} h={13}>
          <rect x="4.500" y="3.500" width="9" height="8" fill="#f4f8fe" stroke="#5374b0" />
          <path d="M3.500 0v7M0 3.500h7M1 1l5 5M6 1L1 6" stroke="#d9962a" />
        </Svg>
      </button>
      <Svg w={14} h={15}>
        <path d="M0 0.500h13L1 15H0z" fill="#e6e9ed" />
        <path d="M0 0.500h13L1 15" stroke="#9aa0a8" />
      </Svg>
      <div className="ml-[464px] flex min-w-0 flex-1 items-center">
        <span className="h-[15px] w-[6px] shrink-0 border border-[#8b9097] bg-white" />
        <button aria-label="Scroll left" className="flex w-[17px] justify-center">
          <Arrow d="M7.500 0v10L2 5z" />
        </button>
        <div className="flex h-[15px] min-w-0 flex-1 items-center justify-center rounded-[2px] border border-[#8b9097] bg-gradient-to-b from-[#f7f8fb] to-[#dcdfe8]">
          <Svg w={8} h={7}>
            <path d="M0.500 0v7M2.500 0v7M4.500 0v7M6.500 0v7" stroke="#8b9097" />
          </Svg>
        </div>
        <button aria-label="Scroll right" className="ml-[52px] flex w-[15px] shrink-0 justify-center">
          <Arrow d="M2.500 0v10L8 5z" />
        </button>
        <span className="mr-[17px] h-[15px] w-[5px] shrink-0 border border-[#8b9097] bg-white" />
      </div>
    </div>
  );
}

function StatusBar() {
  return (
    <footer className="flex h-[22px] shrink-0 items-center bg-gradient-to-b from-[#dfe2e6] to-[#bfc4ca] text-[11px] text-[#3a3f46]">
      <span className="w-[48px] pl-[8px]">Ready</span>
      <span className="h-[19px] w-px bg-[#8f949b]" />
      <button aria-label="Record macro" className="flex w-[34px] justify-center">
        <Svg w={15} h={14}>
          <rect x="1.500" y="1.500" width="13" height="12" fill="#fff" stroke="#4569a8" />
          <path d="M1 2h14v3H1z" fill="#5f86c8" />
          <path d="M3 7.500h10M3 9.500h10M3 11.500h10M6.500 6v7M10.500 6v7" stroke="#8ea9d6" />
          <circle cx="3" cy="3" r="3" fill="#d0453a" />
        </Svg>
      </button>
      <span className="h-[19px] w-px bg-[#8f949b]" />
      <div className="ml-auto flex items-center">
        <span className="h-[19px] w-px bg-[#8f949b]" />
        <button aria-label="Normal view" className="ml-[5px] flex h-[19px] w-[18px] items-center justify-center rounded-[2px] border border-[#c28a22] bg-[#fddb74]">
          <Svg w={13} h={10}>
            <rect x="0.500" y="0.500" width="12" height="9" fill="#fff" stroke="#6b7076" />
            <path d="M4.500 0v10M8.500 0v10M0 3.500h13M0 6.500h13" stroke="#6b7076" />
          </Svg>
        </button>
        <button aria-label="Page layout view" className="flex w-[19px] justify-center">
          <Svg w={14} h={12}>
            <rect x="0.500" y="0.500" width="13" height="11" fill="#a9adb3" stroke="#6b7076" />
            <rect x="3.500" y="1.500" width="7" height="9" fill="#fff" stroke="#6b7076" />
            <path d="M5 4.500h4M5 6.500h4M5 8.500h4" stroke="#999" />
          </Svg>
        </button>
        <button aria-label="Page break view" className="flex w-[19px] justify-center">
          <Svg w={14} h={12}>
            <rect x="0.500" y="0.500" width="13" height="11" fill="#b3b7bd" stroke="#6b7076" />
            <path d="M1 1h4v6H1zM6 1h4v6H6z" fill="#fff" />
            <path d="M5.500 0v7.500H0M10.500 0v7.500H5" stroke="#6b7076" />
          </Svg>
        </button>
        <span className="w-[44px] pl-[4px] text-center">100%</span>
        <button aria-label="Zoom out" className="ml-px">
          <Svg>
            <circle cx="8" cy="8" r="7.500" fill="#f3f4f6" stroke="#7b8087" />
            <path d="M4 8h8" stroke="#444" strokeWidth="2" />
          </Svg>
        </button>
        <input
          type="range"
          aria-label="Zoom"
          defaultValue={50}
          className="h-[14px] w-[100px] appearance-none bg-[linear-gradient(#7b8087,#7b8087)] bg-[length:100%_1px] bg-center bg-no-repeat [&::-webkit-slider-thumb]:h-[12px] [&::-webkit-slider-thumb]:w-[9px] [&::-webkit-slider-thumb]:appearance-none [&::-webkit-slider-thumb]:rounded-b-[4px] [&::-webkit-slider-thumb]:border [&::-webkit-slider-thumb]:border-[#6b7076] [&::-webkit-slider-thumb]:bg-[#f3f4f6]"
        />
        <button aria-label="Zoom in">
          <Svg>
            <circle cx="8" cy="8" r="7.500" fill="#f3f4f6" stroke="#7b8087" />
            <path d="M4 8h8M8 4v8" stroke="#444" strokeWidth="2" />
          </Svg>
        </button>
        <span className="ml-[7px] self-end">
          <Svg w={12} h={12}>
            <path d="M8 1h2v2H8zM8 5h2v2H8zM4 5h2v2H4zM8 9h2v2H8zM4 9h2v2H4zM0 9h2v2H0z" fill="#8f949b" />
          </Svg>
        </span>
      </div>
    </footer>
  );
}

/* ---------- taskbar ---------- */

const Chrome = ({ s = 14 }: { s?: number }) => (
  <Svg w={s} h={s} vb="0 0 16 16">
    <circle cx="8" cy="8" r="7.500" fill="#f2c52d" />
    <path d="M8 8L1.500 4.200A7.500 7.500 0 0 1 14.500 4.500z" fill="#de4a37" />
    <path d="M8 8L1.500 4.200A7.500 7.500 0 0 0 7 15.400z" fill="#3fa04c" />
    <circle cx="8" cy="8" r="3.800" fill="#fff" />
    <circle cx="8" cy="8" r="2.800" fill="#3f7fe0" />
  </Svg>
);

const launchers: [string, ReactNode][] = [
  ["uTorrent", <><rect x="0.500" y="0.500" width="15" height="15" fill="#1e8a2c" stroke="#dff0df" /><path d="M5.500 13V4M5.500 9c0 3 4.500 3 4.500 0V4v5c0 1.500 1 2 2 1.500" stroke="#fff" strokeWidth="1.800" /></>],
  ["Internet Explorer", <><path d="M12.500 5A5.300 5.300 0 1 0 13 11.500" stroke="#6fc0f6" strokeWidth="3" /><path d="M4 8.500h10c0-2-.5-3-1.500-4" stroke="#6fc0f6" strokeWidth="2.400" /><path d="M1 15C-1 10 8 1 15 1" stroke="#f0c94a" strokeWidth="1.400" /></>],
  ["Outlook Express", <><path d="M2 1h9l3 3v11H2z" fill="#eaf4ff" stroke="#2c7fd0" /><path d="M5 5l4 2 4-5M12 10c-2 3-6 3-7 0s2-5 5-3" stroke="#2c7fd0" strokeWidth="1.800" /></>],
  ["Explorer", <><path d="M0.500 2.500h6l1 2h8v10h-15z" fill="#f4cf66" stroke="#b98a20" /><path d="M4 7h9v5H4z" fill="#dcecff" stroke="#7c9cc8" /></>],
  ["Media Player", <><circle cx="8" cy="8" r="7" fill="#f2f3f7" stroke="#e0782c" /><path d="M1 8a7 7 0 0 0 7 7" stroke="#4a9e3c" strokeWidth="2" /><circle cx="8" cy="8" r="4.500" fill="#2c4fa8" /><path d="M6.500 5.500v5l4-2.500z" fill="#fff" /></>],
  ["Gom", <><rect x="0" y="0" width="16" height="16" rx="2" fill="#e3352c" /><circle cx="8" cy="9" r="5.500" fill="#fff" /><circle cx="8" cy="8" r="2" fill="#e3352c" /><circle cx="4" cy="4" r="1.500" fill="#fff" /></>],
  ["Chrome", null],
  ["Your Uninstaller", <><circle cx="8" cy="8" r="7.500" fill="#dfe9f5" stroke="#7fa0cc" /><path d="M3.500 4.500L6 8l2-3.500M6 8v3M9 7v3c0 2 3.500 2 3.500 0V7" stroke="#2b5ea8" strokeWidth="1.600" /></>],
  ["Firefox", <><circle cx="8" cy="7.500" r="7" fill="#2c5cb8" /><path d="M1 3c1-1 2-1 3 1 3-1 4 1 6 1-2 3-5 3-4 5 2 3 7 1 6-7 6 5 4 13-4 13S-2 9 1 3z" fill="#ee7a1c" /></>],
];

function Grip() {
  return (
    <Svg w={6} h={22}>
      <path d="M1.500 0v22M4.500 2v20" stroke="#153a9c" strokeWidth="2" strokeDasharray="2 2" />
    </Svg>
  );
}

function Task({ icon, text, active }: { icon: ReactNode; text: string; active?: boolean }) {
  return (
    <button
      className={`flex h-[25px] w-[159px] items-center gap-[4px] rounded-[2px] border pl-[10px] text-[11px] ${
        active ? "border-[#123a94] bg-[#1a4cb4]" : "border-[#4a86ee] bg-[#3b7df2]"
      }`}
    >
      {icon}
      {text}
    </button>
  );
}

function Taskbar() {
  return (
    <div className="flex h-[34px] shrink-0 items-end bg-[linear-gradient(#2f6ad8,#3f86f0_8%,#2a6be6_22%,#245adc_60%,#2257d6_88%,#1a45b0)] text-white">
      <button className="flex h-[30px] w-[97px] items-center gap-[5px] rounded-r-[8px] bg-[linear-gradient(#5fae5c,#3a8f3a_25%,#2f8430_70%,#2a6e2a)] pl-[10px] font-['Open_Sans',sans-serif] text-[17px] font-bold italic shadow-[inset_-2px_0_3px_#1c5a1e]">
        <Svg w={19} h={18}>
          <path d="M3 2c2-1.500 4-1.500 6 0L7.500 8c-2-1.200-4-1.200-6 0z" fill="#ee6a3a" />
          <path d="M10 2.500c2 1.200 4 1.200 6.500 0L15 8.500c-2 1.200-4 1.200-6.500 0z" fill="#8fd048" />
          <path d="M1.200 9.500c2-1.200 4-1.200 6 0L5.500 15.500c-2-1.200-4-1.200-5.500 0z" fill="#5c96f0" />
          <path d="M8.200 10c2 1.200 4 1.200 6.400 0L13 16c-2 1.200-4 1.200-6.500 0z" fill="#f6d03c" />
        </Svg>
        <span className="leading-[20px]">start</span>
      </button>
      <div className="flex h-[30px] flex-1 items-center">
        <span className="ml-[8px]">
          <Grip />
        </span>
        <div className="ml-[5px] flex">
          {launchers.map(([name, art]) => (
            <button key={name} aria-label={name} className="flex w-[23px] justify-center">
              {art ? <Svg w={15} h={15} vb="0 0 16 16">{art}</Svg> : <Chrome />}
            </button>
          ))}
        </div>
        <span className="ml-[38px]">
          <Grip />
        </span>
        <div className="ml-[4px] flex gap-px">
          <Task icon={<Chrome />} text="Aula.bg - Question - ..." />
          <Task icon={<ExcelDoc />} text="Book2" />
          <Task icon={<ExcelDoc />} text="Stanotpubol" active />
        </div>
        <div className="ml-auto flex h-full items-center text-[11px]">
          <Grip />
          <button className="mr-[3px] ml-[5px] bg-[#3465cc] px-[2px]">BG</button>
          <button aria-label="Help" className="mx-[3px]">
            <Svg w={13} h={14}>
              <path d="M0.500 0.500h12v12h-2v1l-2-1h-8z" fill="#fffbe0" stroke="#111" />
              <path d="M4 5c0-3 5-3 5 0 0 1.500-2.500 1.500-2.500 3.500M6.500 9.500v1.500" stroke="#111" strokeWidth="1.600" />
            </Svg>
          </button>
          <button aria-label="Language options" className="ml-[8px]">
            <Svg w={10} h={18}>
              <path d="M3.500 1.500h6v4h-6zM0.500 3.500h6v4h-6z" stroke="#fff" fill="#2a5edc" />
              <path d="M2 14h6l-3 3z" fill="#fff" />
            </Svg>
          </button>
          <div className="ml-[48px] flex h-full items-center bg-[linear-gradient(#2fb0f4,#149cee_20%,#1290e4_80%,#0f78c8)] pr-[13px]">
            <button aria-label="Show hidden icons" className="-ml-[8px]">
              <Svg w={18} h={18}>
                <circle cx="9" cy="9" r="8" fill="#2c8cea" stroke="#8cc8f8" />
                <path d="M11 5L7 9l4 4" stroke="#fff" strokeWidth="2" />
              </Svg>
            </button>
            <span className="ml-px flex items-center gap-px">
              <Svg>
                <circle cx="8" cy="8" r="7.500" fill="#f08a1c" stroke="#ffd9a0" />
                <path d="M5 11c-2-4 6-8 6-1v3" stroke="#fff" strokeWidth="1.800" />
                <circle cx="8" cy="9.500" r="2" stroke="#fff" strokeWidth="1.500" />
              </Svg>
              <Svg>
                <rect x="5.500" y="1.500" width="8" height="7" fill="#2b3c78" stroke="#b9c4dc" />
                <rect x="1.500" y="5.500" width="8" height="6" fill="#2b3c78" stroke="#b9c4dc" />
                <path d="M2 14h7M10 11h4" stroke="#c9d2e6" strokeWidth="2" />
              </Svg>
            </span>
            <time className="ml-[8px] text-[11px]">15:00</time>
          </div>
        </div>
      </div>
    </div>
  );
}

export default function App() {
  return (
    <div className="flex h-screen flex-col overflow-hidden font-['Open_Sans','Noto_Sans',sans-serif]">
      <div className="flex min-h-0 flex-1 bg-[linear-gradient(#1e3878,#3452a0_25%,#4468b8_50%,#6f88c4_78%,#0c2a10_80%,#081c0a)] pr-[8px]">
        <main className="flex min-w-0 flex-1 flex-col rounded-t-[4px] border-t-2 border-r border-b-2 border-l border-[#5d6168] bg-gradient-to-b from-[#e8eaed] to-[#dde1e5] pr-[3px] pb-px pl-[3px]">
          <TitleBar />
          <RibbonTabs />
          <Ribbon />
          <FormulaBar />
          <div className="flex min-h-0 flex-1 border-t border-[#8f949b]">
            <Sheet />
            <VerticalScroll />
          </div>
          <SheetTabs />
          <StatusBar />
        </main>
      </div>
      <Taskbar />
    </div>
  );
}
